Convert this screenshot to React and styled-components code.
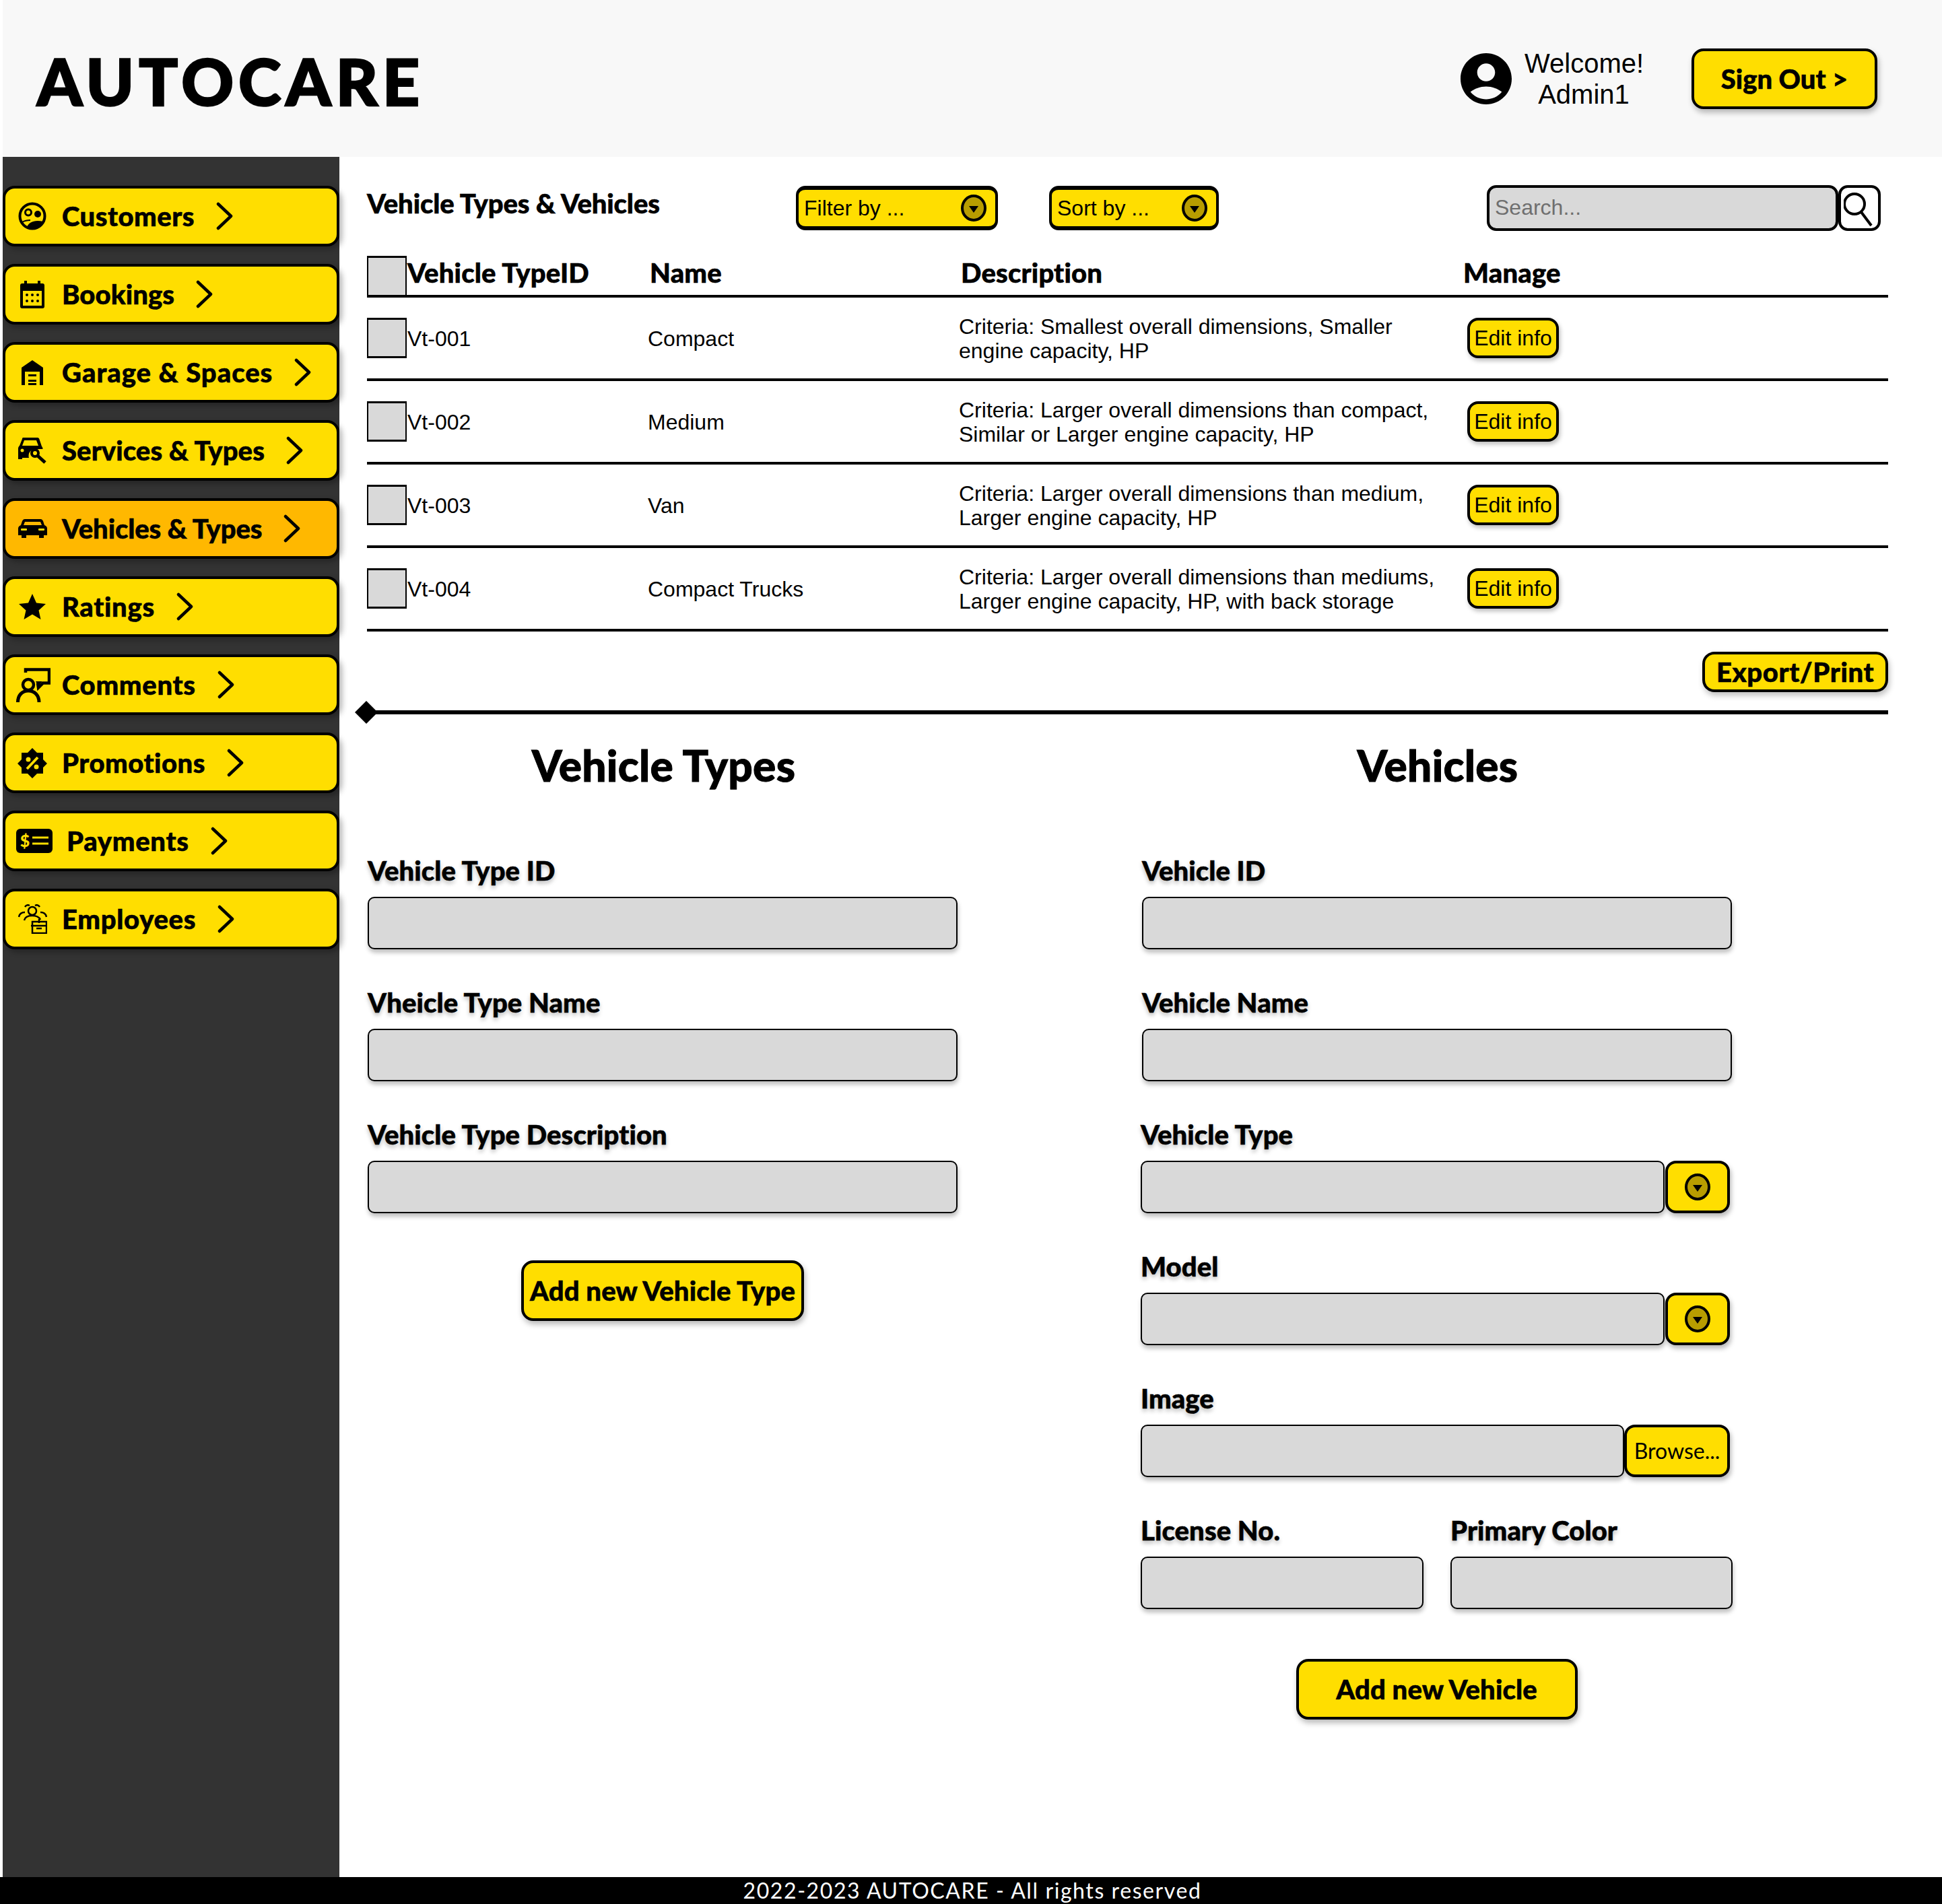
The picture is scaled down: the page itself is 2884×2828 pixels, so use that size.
import React from 'react';
import styled, { createGlobalStyle } from 'styled-components';

const YELLOW = '#ffde00';
const HEAD = '"Lato", "Noto Sans", sans-serif';
const BODY = '"Liberation Sans", Arial, sans-serif';

const Global = createGlobalStyle`
  html, body { margin: 0; padding: 0; background: #fff; }
  * { box-sizing: border-box; }
  body { font-family: ${BODY}; color: #000; }
`;

const Page = styled.div`
  width: 2884px;
  height: 2828px;
  padding-left: 4px;
  display: grid;
  grid-template-columns: 500px 1fr;
  grid-template-rows: 233px 1fr 40px;
  overflow: hidden;
`;

const Header = styled.header`
  grid-column: 1 / 3;
  background: #f8f8f8;
  display: flex;
  align-items: center;
  justify-content: space-between;
  padding: 0 96px 0 51px;
`;

const Logo = styled.h1`
  margin: 6px 0 0;
  font: 900 96px/1 ${HEAD};
  letter-spacing: 7px;
  -webkit-text-stroke: 2.5px #000;
`;

const UserArea = styled.div`
  display: flex;
  align-items: center;
`;

const Avatar = styled.svg`
  width: 76px;
  height: 76px;
  display: block;
`;

const Welcome = styled.div`
  width: 176px;
  margin: 0 72px 0 19px;
  font-size: 40px;
  line-height: 46px;
  text-align: center;
`;

const SignOut = styled.button`
  width: 276px;
  height: 90px;
  border: 4px solid #000;
  border-radius: 18px;
  background: ${YELLOW};
  font: 900 40px/1 ${HEAD};
  -webkit-text-stroke: .6px #000;
  color: #000;
  padding: 0;
  box-shadow: 2px 5px 8px rgba(0, 0, 0, .28);
`;

const Sidebar = styled.nav`
  background: #333;
  padding-top: 43px;
  display: flex;
  flex-direction: column;
  gap: 26px;
`;

const NavItem = styled.a`
  height: 90px;
  width: 500px;
  border: 4px solid #000;
  border-radius: 18px;
  background: ${p => (p.$active ? '#ffb800' : YELLOW)};
  box-shadow: 4px 4px 8px rgba(0, 0, 0, .3);
  display: flex;
  align-items: center;
  padding-left: 16px;
  font: 900 40px/1 ${HEAD};
  -webkit-text-stroke: .6px #000;
  color: #000;
`;

const NavText = styled.span`
  letter-spacing: ${p => p.$ls}px;
`;

const IconSlot = styled.span`
  flex: none;
  width: ${p => (p.$wide ? 54 : 48)}px;
  margin-right: ${p => (p.$wide ? 21 : 20)}px;
  display: flex;
  justify-content: center;
  -webkit-text-stroke: 0;
  svg { display: block; flex: none; }
`;

const NavChevron = styled.svg`
  width: 25px;
  height: 42px;
  margin-left: 32px;
  flex: none;
`;

const Footer = styled.footer`
  grid-column: 1 / 3;
  background: #000;
  color: #fff;
  font: 400 32px/40px ${HEAD};
  letter-spacing: 1.58px;
  text-align: center;
  margin-left: -4px;
  padding-left: 4px;
`;

const Main = styled.main`
  padding: 42px 80px 0 41px;
  min-width: 0;
`;

const Toolbar = styled.div`
  display: flex;
  align-items: center;
  height: 68px;
`;

const PageTitle = styled.h2`
  width: 637px;
  margin: 0 0 14px;
  font: 900 40px/48px ${HEAD};
  letter-spacing: -0.1px;
  -webkit-text-stroke: .6px #000;
`;

const Picker = styled.div`
  width: ${p => p.$w}px;
  height: 66px;
  margin-left: ${p => p.$ml || 0}px;
  border-style: solid;
  border-color: #000;
  border-width: 6px 4px;
  border-radius: 14px;
  background: ${YELLOW};
  display: flex;
  align-items: center;
  justify-content: space-between;
  padding: 0 13px 0 8px;
  font-size: 32px;
`;

const Caret = styled.svg`
  width: 38px;
  height: 40px;
  display: block;
  flex: none;
`;

const SearchGroup = styled.div`
  margin-left: auto;
  margin-right: 11px;
  display: flex;
  height: 68px;
`;

const SearchInput = styled.input`
  width: 522px;
  height: 68px;
  border: 4px solid #000;
  border-radius: 14px;
  background: #d9d9d9;
  padding: 0 0 2px 8px;
  font: 32px ${BODY};
  outline: none;
  &::placeholder { color: #6f6f6f; opacity: 1; }
`;

const SearchButton = styled.button`
  width: 63px;
  height: 68px;
  border: 4px solid #000;
  border-radius: 14px;
  background: #fff;
  padding: 0;
  svg { display: block; margin: auto; }
`;

const HeadRow = styled.div`
  margin-top: 37px;
  height: 62px;
  border-bottom: 4px solid #000;
  display: grid;
  grid-template-columns: 60px 360px 462px 746px 1fr;
  align-items: center;
  font: 900 40px/1 ${HEAD};
  letter-spacing: 0.2px;
  -webkit-text-stroke: .6px #000;
`;

const HeadCell = styled.div`
  transform: translateY(-4px);
`;

const Check = styled.div`
  width: 59px;
  height: ${p => p.$h}px;
  background: #d9d9d9;
  border: 2px solid #000;
  border-bottom-width: ${p => (p.$open ? 0 : 3)}px;
  border-top-width: 3px;
`;

const Row = styled.div`
  height: 124px;
  border-bottom: 4px solid #000;
  display: grid;
  grid-template-columns: 60px 357px 462px 755px 1fr;
  align-items: center;
  font-size: 32px;
  line-height: 36px;
`;

const Cell = styled.div`
  padding-top: 2px;
`;

const Desc = styled(Cell)`
  max-width: 720px;
`;

const EditButton = styled.button`
  width: 136px;
  height: 60px;
  border: 4px solid #000;
  border-radius: 16px;
  background: ${YELLOW};
  padding: 0;
  font: 32px ${BODY};
  color: #000;
  box-shadow: 2px 4px 6px rgba(0, 0, 0, .25);
`;

const ExportRow = styled.div`
  display: flex;
  justify-content: flex-end;
  margin-top: 30px;
`;

const ExportButton = styled.button`
  width: 276px;
  height: 60px;
  border: 4px solid #000;
  border-radius: 18px;
  background: ${YELLOW};
  padding: 0;
  font: 900 40px/1 ${HEAD};
  letter-spacing: .6px;
  -webkit-text-stroke: .6px #000;
  color: #000;
  box-shadow: 2px 5px 8px rgba(0, 0, 0, .25);
`;

const Divider = styled.div`
  position: relative;
  margin-top: 27px;
  height: 6px;
  background: #000;
  &::before {
    content: '';
    position: absolute;
    left: -18px;
    top: -14px;
    width: 34px;
    height: 34px;
    background: #000;
    clip-path: polygon(50% 0, 100% 50%, 50% 100%, 0 50%);
  }
`;

const Forms = styled.div`
  display: grid;
  grid-template-columns: 876px 879px;
  column-gap: 272px;
  margin-left: 1px;
`;

const Column = styled.section`
  display: flex;
  flex-direction: column;
`;

const FormTitle = styled.h3`
  margin: 37px 0 95px;
  padding-left: 3px;
  font: 900 64px/77px ${HEAD};
  letter-spacing: .25px;
  -webkit-text-stroke: 1px #000;
  text-align: center;
`;

const Field = styled.div`
  margin-bottom: ${p => (p.$last ? 0 : 56)}px;
  margin-left: ${p => (p.$indent ? 2 : 0)}px;
`;

const Label = styled.div`
  height: 48px;
  margin-bottom: 14px;
  font: 900 40px/47px ${HEAD};
  letter-spacing: 0.1px;
  -webkit-text-stroke: .6px #000;
  text-shadow: 0 4px 6px rgba(0, 0, 0, .28);
  white-space: nowrap;
`;

const Box = styled.div`
  height: 78px;
  width: ${p => (p.$w ? `${p.$w}px` : '100%')};
  flex: none;
  background: #d9d9d9;
  border: 2px solid #000;
  border-radius: 10px;
  box-shadow: 1px 5px 6px rgba(0, 0, 0, .25);
`;

const Combo = styled.div`
  display: flex;
  width: 876px;
`;

const SideButton = styled.button`
  margin-left: ${p => p.$ml}px;
  width: ${p => p.$w}px;
  height: 78px;
  flex: none;
  border: 4px solid #000;
  border-radius: 16px;
  background: ${YELLOW};
  padding: 0;
  font: 400 32px/1 ${HEAD};
  color: #000;
  display: flex;
  align-items: center;
  justify-content: center;
  box-shadow: 2px 5px 7px rgba(0, 0, 0, .28);
`;

const Pair = styled.div`
  display: grid;
  grid-template-columns: 420px 419px;
  column-gap: 40px;
`;

const AddButton = styled.button`
  align-self: center;
  width: ${p => p.$w}px;
  height: 90px;
  margin-top: ${p => p.$mt}px;
  border: 4px solid #000;
  border-radius: 18px;
  background: ${YELLOW};
  padding: 0;
  font: 900 40px/1 ${HEAD};
  letter-spacing: .15px;
  -webkit-text-stroke: .6px #000;
  color: #000;
  box-shadow: 2px 5px 8px rgba(0, 0, 0, .28);
`;

const IconCustomers = () => (
  <svg width="42" height="42" viewBox="0 0 42 42">
    <circle cx="21" cy="21" r="18.5" fill="none" stroke="#000" strokeWidth="4" />
    <circle cx="15" cy="15.5" r="4.500" fill="none" stroke="#000" strokeWidth="3" />
    <circle cx="29" cy="18" r="5" fill="#000" />
    <path d="M6 30c5-3 9-3 12-3" fill="none" stroke="#000" strokeWidth="2" />
    <path d="M13 37c3-7 11-11 24-8-3 7-8 11-14 12-4 0-7-1-10-4z" fill="#000" />
  </svg>
);

const IconCalendar = () => (
  <svg width="36" height="41" viewBox="0 0 36 41">
    <path fillRule="evenodd" d="M6 0h4v4h16V0h4v4h3a3 3 0 0 1 3 3v31a3 3 0 0 1-3 3H3a3 3 0 0 1-3-3V7a3 3 0 0 1 3-3h3zM4 15v22h28V15z" fill="#000" />
    {[10, 18, 26].map(x => [21, 30].map(y => <circle key={`${x}-${y}`} cx={x} cy={y} r="2" fill="#000" />))}
  </svg>
);

const IconGarage = () => (
  <svg width="32" height="37" viewBox="0 0 32 37">
    <path d="M16 0l16 11v26h-5V17H5v20H0V11z" fill="#000" />
    <path d="M10 21h12v3H10zM10 29h12v3H10zM10 34h12v3H10z" fill="#000" />
  </svg>
);

const IconServices = () => (
  <svg width="42" height="40" viewBox="0 0 42 40">
    <path fillRule="evenodd" d="M7 1h22c1 0 2 1 2.300 2L35 14c1 1 1.500 2 1.500 4H27a10 10 0 0 0-11 13H6v2H0V17c0-2 1-3 2-4L6 3c0-1 .5-2 1-2zM9 5l-3 8h24l-3-8z" fill="#000" />
    <circle cx="6" cy="20" r="2.500" fill={YELLOW} />
    <circle cx="25" cy="24" r="5" fill="none" stroke="#000" strokeWidth="4" />
    <path d="M29 28l11 10" stroke="#000" strokeWidth="5" />
  </svg>
);

const IconCar = () => (
  <svg width="43" height="30" viewBox="0 0 43 30">
    <path fillRule="evenodd" d="M10 1h23c2 0 3 1 4 3l2 6c3 1 4 3 4 5v10h-5v4h-7v-4H12v4H5v-4H0V15c0-2 1-4 4-5l2-6c1-2 2-3 4-3zM10 5L8 10h27l-2-5z" fill="#000" />
    <rect x="4" y="15" width="9" height="3" rx="1" fill={YELLOW} />
    <rect x="30" y="15" width="9" height="3" rx="1" fill={YELLOW} />
  </svg>
);

const IconStar = () => (
  <svg width="40" height="38" viewBox="0 0 40 38">
    <path d="M20 0l6 13.500 14 1.500-10.500 9.500L32.500 38 20 30.500 7.500 38l3-13.500L0 15l14-1.500z" fill="#000" />
  </svg>
);

const IconComments = () => (
  <svg width="51" height="51" viewBox="0 0 51 51" style={{ marginLeft: 2 }}>
    <path d="M14 7V2.500h35v20H40l-7 7-1-7" fill="none" stroke="#000" strokeWidth="4.500" />
    <path d="M29 20h10l-6 7z" fill="#000" />
    <circle cx="18" cy="25" r="8" fill="none" stroke="#000" strokeWidth="4.500" />
    <path d="M2.500 51c0-10 6-17 15.500-17s16 7 16 17" fill="none" stroke="#000" strokeWidth="5" />
  </svg>
);

const IconPromo = () => (
  <svg width="44" height="45" viewBox="0 0 44 45">
    <path d="M22 0l7 7h9v10l6 6-6 6v9h-9l-7 7-7-7H6v-9l-6-6 6-6V7h9z" fill="#000" />
    <path d="M14 31l16-17" stroke={YELLOW} strokeWidth="4" />
    <circle cx="16" cy="17" r="3.500" fill={YELLOW} />
    <circle cx="28" cy="28" r="3.500" fill={YELLOW} />
  </svg>
);

const IconPayment = () => (
  <svg width="54" height="36" viewBox="0 0 54 36">
    <rect width="54" height="36" rx="6" fill="#000" />
    <text x="13" y="27" textAnchor="middle" fontFamily={HEAD} fontWeight="900" fontSize="25" fill={YELLOW}>$</text>
    <path d="M24 13h24M24 22h24" stroke={YELLOW} strokeWidth="3" />
  </svg>
);

const IconEmployees = () => (
  <svg width="43" height="44" viewBox="0 0 43 44" fill="none" stroke="#000" strokeWidth="2.500">
    <circle cx="21" cy="10" r="6" />
    <path d="M10 4c2-3 5-3 7-2M32 4c-2-3-5-3-7-2" />
    <path d="M1 19c1-5 5-7 9-7M42 19c-1-5-5-7-9-7" />
    <path d="M9 24c1-5 6-7 12-7s10 2 12 6" />
    <rect x="21" y="26" width="21" height="17" />
    <path d="M19 32h24M31 22v6M27 36h8" />
  </svg>
);

const navItems = [
  { label: 'Customers', Icon: IconCustomers, ls: 0.5 },
  { label: 'Bookings', Icon: IconCalendar, ls: 0.1 },
  { label: 'Garage & Spaces', Icon: IconGarage, ls: 1 },
  { label: 'Services & Types', Icon: IconServices, ls: 0.1 },
  { label: 'Vehicles & Types', Icon: IconCar, ls: -0.1, active: true },
  { label: 'Ratings', Icon: IconStar, ls: 0.7 },
  { label: 'Comments', Icon: IconComments, ls: 0.7 },
  { label: 'Promotions', Icon: IconPromo, ls: 0.5 },
  { label: 'Payments', Icon: IconPayment, ls: 0.7, wide: true },
  { label: 'Employees', Icon: IconEmployees, ls: 0.7 },
];

const rows = [
  ['Vt-001', 'Compact', 'Criteria: Smallest overall dimensions, Smaller engine capacity, HP'],
  ['Vt-002', 'Medium', 'Criteria: Larger overall dimensions than compact, Similar or Larger engine capacity, HP'],
  ['Vt-003', 'Van', 'Criteria: Larger overall dimensions than medium, Larger engine capacity, HP'],
  ['Vt-004', 'Compact Trucks', 'Criteria: Larger overall dimensions than mediums, Larger engine capacity, HP, with back storage'],
];

const CaretIcon = () => (
  <Caret viewBox="0 0 38 40">
    <ellipse cx="19" cy="20" rx="17" ry="18" fill="#b89d00" stroke="#000" strokeWidth="4" />
    <path d="M12 17h14l-7 10z" fill="#000" />
  </Caret>
);

export default function App() {
  return (
    <Page>
      <Global />
      <Header>
        <Logo>AUTOCARE</Logo>
        <UserArea>
          <Avatar viewBox="2 2 20 20">
            <path d="M12 2C6.480 2 2 6.480 2 12s4.480 10 10 10 10-4.480 10-10S17.520 2 12 2zm0 4c1.930 0 3.500 1.570 3.500 3.500S13.930 13 12 13s-3.500-1.570-3.500-3.500S10.070 6 12 6zm0 14c-2.030 0-4.430-.82-6.140-2.880C7.550 15.800 9.680 15 12 15s4.450.8 6.140 2.120C16.430 19.180 14.030 20 12 20z" fill="#000" />
          </Avatar>
          <Welcome>Welcome!<br />Admin1</Welcome>
          <SignOut>Sign Out &gt;</SignOut>
        </UserArea>
      </Header>

      <Sidebar>
        {navItems.map(({ label, Icon, ls, active, wide }) => (
          <NavItem key={label} $active={active}>
            <IconSlot $wide={wide}><Icon /></IconSlot>
            <NavText $ls={ls}>{label}</NavText>
            <NavChevron viewBox="0 0 25 42">
              <path d="M3 3l19 18L3 39" fill="none" stroke="#000" strokeWidth="4.500" strokeLinecap="round" strokeLinejoin="round" />
            </NavChevron>
          </NavItem>
        ))}
      </Sidebar>

      <Main>
        <Toolbar>
          <PageTitle>Vehicle Types &amp; Vehicles</PageTitle>
          <Picker $w={300}>Filter by ...<CaretIcon /></Picker>
          <Picker $w={252} $ml={76}>Sort by ...<CaretIcon /></Picker>
          <SearchGroup>
            <SearchInput placeholder="Search..." />
            <SearchButton aria-label="Search">
              <svg width="48" height="56" viewBox="0 0 48 56">
                <circle cx="16" cy="22" r="15" fill="none" stroke="#000" strokeWidth="4" />
                <path d="M26 34l15 20" stroke="#000" strokeWidth="4" />
              </svg>
            </SearchButton>
          </SearchGroup>
        </Toolbar>

        <HeadRow>
          <Check $h={58} $open />
          <HeadCell>Vehicle TypeID</HeadCell>
          <HeadCell>Name</HeadCell>
          <HeadCell>Description</HeadCell>
          <HeadCell>Manage</HeadCell>
        </HeadRow>

        {rows.map(([id, name, desc]) => (
          <Row key={id}>
            <Check $h={60} />
            <Cell>{id}</Cell>
            <Cell>{name}</Cell>
            <Desc>{desc}</Desc>
            <div><EditButton>Edit info</EditButton></div>
          </Row>
        ))}

        <ExportRow><ExportButton>Export/Print</ExportButton></ExportRow>
        <Divider />

        <Forms>
          <Column>
            <FormTitle>Vehicle Types</FormTitle>
            <Field><Label>Vehicle Type ID</Label><Box /></Field>
            <Field><Label>Vheicle Type Name</Label><Box /></Field>
            <Field $last><Label>Vehicle Type Description</Label><Box /></Field>
            <AddButton $w={420} $mt={70}>Add new Vehicle Type</AddButton>
          </Column>
          <Column>
            <FormTitle>Vehicles</FormTitle>
            <Field $indent><Label>Vehicle ID</Label><Box $w={876} /></Field>
            <Field $indent><Label>Vehicle Name</Label><Box $w={876} /></Field>
            <Field>
              <Label>Vehicle Type</Label>
              <Combo><Box $w={778} /><SideButton $w={96} $ml={1}><CaretIcon /></SideButton></Combo>
            </Field>
            <Field>
              <Label>Model</Label>
              <Combo><Box $w={778} /><SideButton $w={96} $ml={1}><CaretIcon /></SideButton></Combo>
            </Field>
            <Field>
              <Label>Image</Label>
              <Combo><Box $w={718} /><SideButton $w={157} $ml={0}>Browse...</SideButton></Combo>
            </Field>
            <Pair>
              <Field $last><Label>License No.</Label><Box /></Field>
              <Field $last><Label>Primary Color</Label><Box /></Field>
            </Pair>
            <AddButton $w={418} $mt={74}>Add new Vehicle</AddButton>
          </Column>
        </Forms>
      </Main>

      <Footer>2022-2023 AUTOCARE - All rights reserved</Footer>
    </Page>
  );
}
